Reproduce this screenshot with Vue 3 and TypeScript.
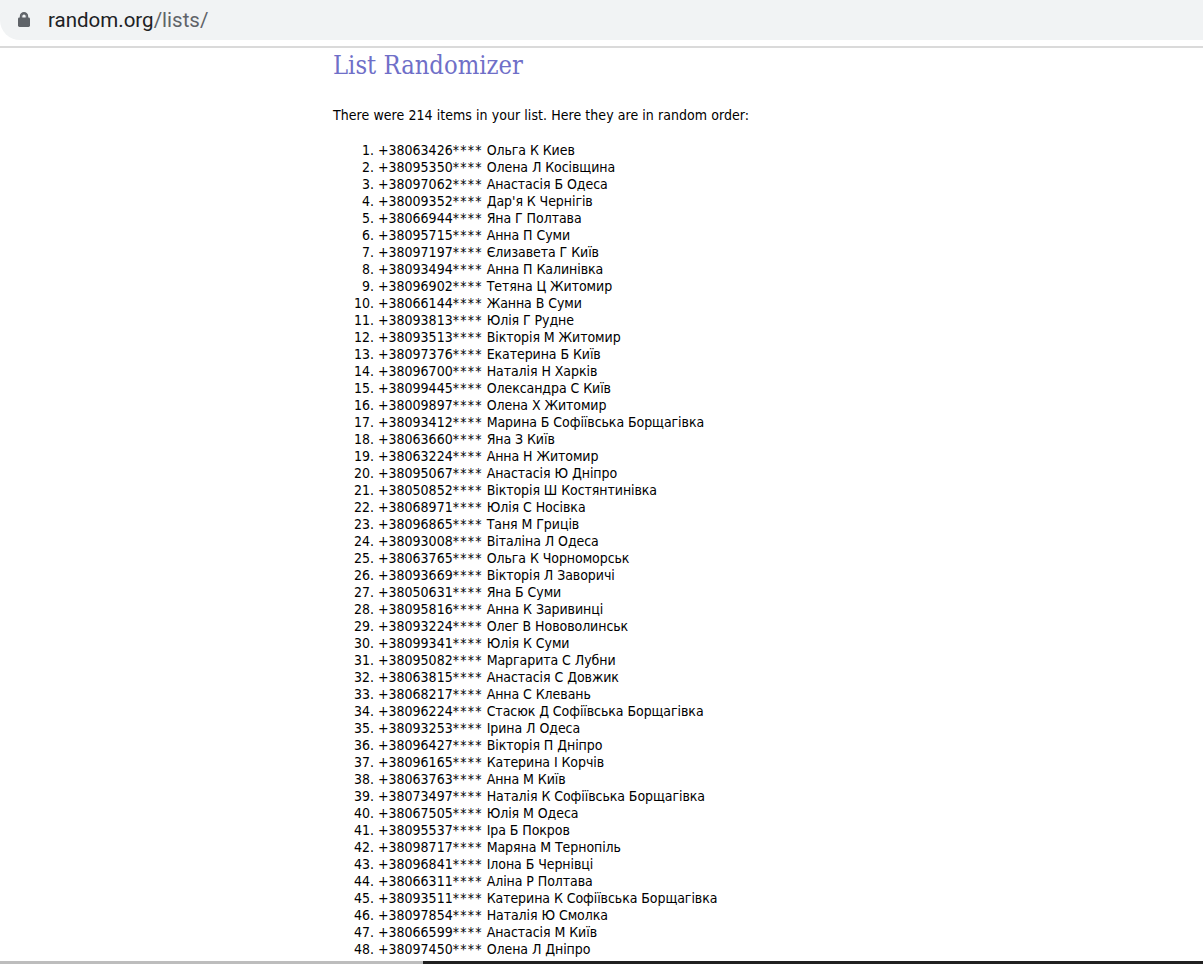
<template>
  <div class="page">
    <header class="chrome">
      <div class="address">
        <svg class="lock" width="12" height="15" viewBox="0 0 12 15">
          <path d="M2.4 6V4.2a3.6 3.6 0 0 1 7.2 0V6M3.7 6V4.2a2.3 2.3 0 0 1 4.6 0V6" fill="none" stroke="#5f6368" stroke-width="1.2" />
          <rect x="0" y="5.5" width="12" height="9.5" rx="1.4" fill="#5f6368" />
        </svg>
        <span class="url">random.org<span class="path">/lists/</span></span>
      </div>
    </header>

    <main class="content">
      <h2>List Randomizer</h2>
      <p>There were 214 items in your list. Here they are in random order:</p>
      <ol>
        <li v-for="item in rows" :key="item.phone">
          {{ item.phone }}<span class="stars">****</span> <span class="name">{{ item.name }}</span>
        </li>
      </ol>
    </main>

    <div class="bottom-edge">
      <div class="edge-light"></div>
      <div class="edge-dark"></div>
    </div>
  </div>
</template>

<script setup lang="ts">
const items: string[] = [
  "+38063426 Ольга К Киев",
  "+38095350 Олена Л Косівщина",
  "+38097062 Анастасія Б Одеса",
  "+38009352 Дар'я К Чернігів",
  "+38066944 Яна Г Полтава",
  "+38095715 Анна П Суми",
  "+38097197 Єлизавета Г Київ",
  "+38093494 Анна П Калинівка",
  "+38096902 Тетяна Ц Житомир",
  "+38066144 Жанна В Суми",
  "+38093813 Юлія Г Рудне",
  "+38093513 Вікторія М Житомир",
  "+38097376 Екатерина Б Київ",
  "+38096700 Наталія Н Харків",
  "+38099445 Олександра С Київ",
  "+38009897 Олена Х Житомир",
  "+38093412 Марина Б Софіївська Борщагівка",
  "+38063660 Яна З Київ",
  "+38063224 Анна Н Житомир",
  "+38095067 Анастасія Ю Дніпро",
  "+38050852 Вікторія Ш Костянтинівка",
  "+38068971 Юлія С Носівка",
  "+38096865 Таня М Гриців",
  "+38093008 Віталіна Л Одеса",
  "+38063765 Ольга К Чорноморськ",
  "+38093669 Вікторія Л Заворичі",
  "+38050631 Яна Б Суми",
  "+38095816 Анна К Заривинці",
  "+38093224 Олег В Нововолинськ",
  "+38099341 Юлія К Суми",
  "+38095082 Маргарита С Лубни",
  "+38063815 Анастасія С Довжик",
  "+38068217 Анна С Клевань",
  "+38096224 Стасюк Д Софіївська Борщагівка",
  "+38093253 Ірина Л Одеса",
  "+38096427 Вікторія П Дніпро",
  "+38096165 Катерина І Корчів",
  "+38063763 Анна М Київ",
  "+38073497 Наталія К Софіївська Борщагівка",
  "+38067505 Юлія М Одеса",
  "+38095537 Іра Б Покров",
  "+38098717 Маряна М Тернопіль",
  "+38096841 Ілона Б Чернівці",
  "+38066311 Аліна Р Полтава",
  "+38093511 Катерина К Софіївська Борщагівка",
  "+38097854 Наталія Ю Смолка",
  "+38066599 Анастасія М Київ",
  "+38097450 Олена Л Дніпро",
  "+38000000",
];

const rows = items.map((line) => {
  const cut = line.indexOf(" ");
  return cut < 0
    ? { phone: line, name: "" }
    : { phone: line.slice(0, cut), name: line.slice(cut + 1) };
});
</script>

<style>
html,
body {
  margin: 0;
  background: #fff;
  overflow: hidden;
}
</style>

<style scoped>
.page {
  display: flex;
  flex-direction: column;
  height: 964px;
  overflow: hidden;
  background: #fff;
}

.chrome {
  flex: none;
  height: 46px;
  border-bottom: 2px solid #dadada;
}

.address {
  display: flex;
  align-items: center;
  gap: 18px;
  height: 40px;
  padding-left: 18px;
  background: #f1f3f4;
  border-bottom-left-radius: 20px;
}

.lock {
  flex: none;
  margin-top: -1px;
}

.url {
  font-family: Roboto, "Liberation Sans", sans-serif;
  font-size: 20.5px;
  color: #202124;
}

.path {
  color: #5f6368;
}

.content {
  flex: 1;
  min-height: 0;
  overflow: hidden;
  padding-left: 333px;
  font-family: "DejaVu Sans", Verdana, sans-serif;
  font-stretch: condensed;
  font-size: 14px;
  line-height: 17px;
  color: #000;
}

h2 {
  margin: 3px 0 0;
  font-family: "DejaVu Serif", Georgia, serif;
  font-stretch: condensed;
  font-size: 25.3px;
  line-height: 30px;
  font-weight: 400;
  color: #6f6fc8;
}

p {
  margin: 26px 0 18px;
  letter-spacing: 0.06px;
}

ol {
  margin: 0;
  padding-left: 45px;
}

.stars {
  letter-spacing: 1.2px;
}

.name {
  letter-spacing: -0.07px;
}

.bottom-edge {
  flex: none;
  display: flex;
  height: 3px;
}

.edge-light {
  width: 423px;
  background: #bdbdbd;
}

.edge-dark {
  flex: 1;
  background: #202020;
}
</style>
